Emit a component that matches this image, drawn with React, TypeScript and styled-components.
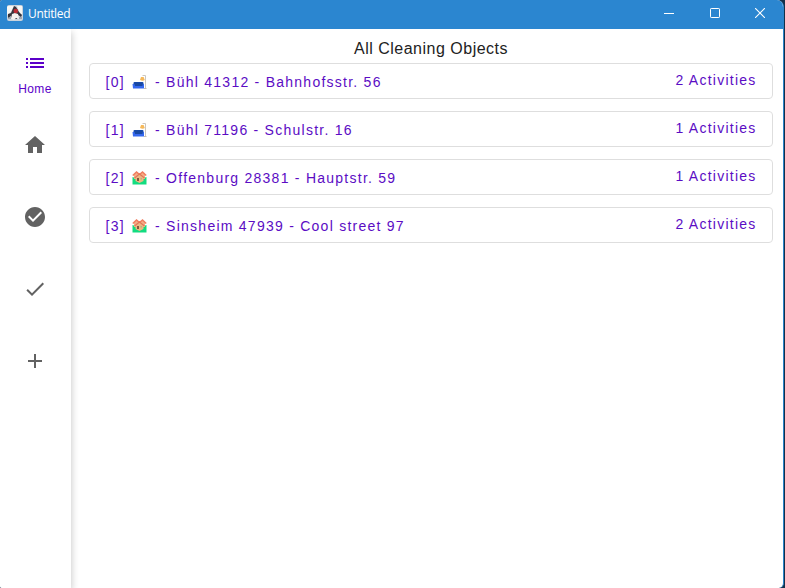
import React from "react";
import styled, { createGlobalStyle } from "styled-components";

const GlobalStyle = createGlobalStyle`
  * { box-sizing: border-box; }
  html, body { margin: 0; height: 100%; background: #14304a; overflow: hidden; }
  body { font-family: "Liberation Sans", Arial, sans-serif; }
`;

const Window = styled.div`
  display: flex;
  flex-direction: column;
  width: 784px;
  height: 588px;
  border-right: 1px solid #2b84c9;
  border-radius: 2px 7px 5px 2px;
  overflow: hidden;
  background: #fff;
`;

const TitleBar = styled.header`
  display: flex;
  align-items: center;
  flex: 0 0 29px;
  height: 29px;
  padding: 0 0 3px 7px;
  background: #2b86d0;
  color: #fff;
`;

const WindowTitle = styled.span`
  flex: 1;
  margin: 2px 0 0 5px;
  font: 12px/16px "Open Sans", "Noto Sans", sans-serif;
  letter-spacing: -0.32px;
`;

const WindowButton = styled.button`
  display: flex;
  align-items: center;
  justify-content: center;
  width: 45.5px;
  height: 26px;
  padding: 0;
  border: 0;
  background: none;
  color: #fff;
`;

const Body = styled.div`
  display: flex;
  flex: 1;
  min-height: 0;
`;

const Rail = styled.nav`
  display: flex;
  flex-direction: column;
  flex: 0 0 71px;
  padding-top: 8px;
  background: #fff;
  box-shadow: 1px 3px 7px rgba(0, 0, 0, 0.2);
  clip-path: inset(0 -12px 0 0);
`;

const RailItem = styled.button<{ $active?: boolean }>`
  display: flex;
  flex-direction: column;
  align-items: center;
  justify-content: center;
  gap: 7px;
  height: 72px;
  padding: ${(p) => (p.$active ? "1px" : "0")} 1px 0 0;
  border: 0;
  background: none;
  color: ${(p) => (p.$active ? "#5b00c9" : "#626262")};
  font: 12px/14px "Liberation Sans", Arial, sans-serif;
  letter-spacing: 0.4px;
  svg { display: block; }
`;

const Content = styled.main`
  display: flex;
  flex-direction: column;
  flex: 1;
  padding: 10px 10px 0 18px;
`;

const Heading = styled.h1`
  margin: 0 0 4px;
  height: 20px;
  font-size: 16px;
  line-height: 20px;
  font-weight: 400;
  letter-spacing: 0.5px;
  text-align: center;
  color: #222;
`;

const ObjectList = styled.div`
  display: flex;
  flex-direction: column;
  gap: 12px;
`;

const ObjectRow = styled.button`
  display: flex;
  justify-content: space-between;
  align-items: flex-start;
  height: 36px;
  padding: 8px 15.4px 0 15.6px;
  border: 1px solid #dedede;
  border-radius: 4px;
  background: #fff;
  color: #5b0cc4;
  font: 14px/16px "Liberation Sans", Arial, sans-serif;
  letter-spacing: 1.25px;
`;

const ObjectName = styled.span`
  display: flex;
  padding-top: 2px;
  white-space: pre;
  svg { flex: none; margin: 0 7px 0 2px; }
`;

type Kind = "couch" | "houses";

const objects: { kind: Kind; address: string; activities: number }[] = [
  { kind: "couch", address: "Bühl 41312 - Bahnhofsstr. 56", activities: 2 },
  { kind: "couch", address: "Bühl 71196 - Schulstr. 16", activities: 1 },
  { kind: "houses", address: "Offenburg 28381 - Hauptstr. 59", activities: 1 },
  { kind: "houses", address: "Sinsheim 47939 - Cool street 97", activities: 2 },
];

const railItems = [
  { label: "Home", path: "M3 13h2v-2H3zM3 17h2v-2H3zM3 9h2V7H3zM7 13h14v-2H7zM7 17h14v-2H7zM7 7v2h14V7z" },
  { path: "M10 20v-6h4v6h5v-8h3L12 3 2 12h3v8z" },
  { path: "M12 2C6.48 2 2 6.48 2 12s4.48 10 10 10 10-4.48 10-10S17.52 2 12 2zm-2 15l-5-5 1.41-1.41L10 14.17l7.59-7.59L19 8l-9 9z" },
  { path: "M9 16.17L4.83 12l-1.42 1.41L9 19 21 7l-1.41-1.41z" },
  { path: "M19 13h-6v6h-2v-6H5v-2h6V5h2v6h6z" },
];

function DukeIcon() {
  return (
    <svg width="16" height="16" viewBox="0 0 16 16">
      <rect width="16" height="16" rx="2" fill="#c9d3dc" />
      <path d="M1 1h6L3 8 0 10V2zM10 1h5v8h-2z" fill="#f7f7f4" />
      <path d="M7 1l2 1 3 5 3 3-1 2-3-2-1 4H5l-1-3-3 2V9l3-1z" fill="#34343d" />
      <path d="M5 9l3-1 3 1 1 5-3-1-2 2-3-1z" fill="#f4f1ef" />
      <circle cx="8.8" cy="6" r="2.3" fill="#b92c35" />
      <path d="M1 13h3M12 13h3" stroke="#747b84" strokeWidth="1.2" />
    </svg>
  );
}

function CouchIcon() {
  return (
    <svg width="16" height="16" viewBox="0 0 16 16">
      <path d="M13.5 14.5V1.5h-3" fill="none" stroke="#cbc6bf" />
      <path d="M9 3h2.6l1.2 3q-2 1.5-4.8 0z" fill="#f6b95b" />
      <path d="M1.5 9q0-1 1-1h8q1 0 1 1v3h-10z" fill="#174aab" />
      <path d="M.5 10h1.8l1 2h6.5l1-2H12v4.5H1z" fill="#3468ee" />
      <path d="M3 9h7.5v3H3z" fill="#1848a2" />
      <path d="M12 14.5h2.5" stroke="#c5bdb2" />
    </svg>
  );
}

function HousesIcon() {
  return (
    <svg width="16" height="16" viewBox="0 0 16 16">
      <path d="M.5 7l3 1h8l3-1v7.5H.5z" fill="#12dc80" />
      <path d="M2 4l3-2 2.5 2L10 2l3 2v5H2z" fill="#f5ae86" />
      <path d="M.8 5.5L4.5 2l3 2.5 3-2.5 3.7 3.5" fill="none" stroke="#f07e60" strokeWidth="1.6" />
      <path d="M3.5 8l4-3.5 4 3.5v3l-4 2-4-2z" fill="#ecb982" />
      <path d="M2.5 8l5-4 5 4" fill="none" stroke="#e2775a" strokeWidth="1.2" />
      <path d="M5 8h2v3H5z" fill="#84583d" />
      <path d="M8.5 8H10v1.5H8.5z" fill="#b8ad83" />
    </svg>
  );
}

export default function App() {
  return (
    <>
      <GlobalStyle />
      <Window>
        <TitleBar>
          <DukeIcon />
          <WindowTitle>Untitled</WindowTitle>
          <WindowButton aria-label="Minimize">
            <svg width="10" height="10"><path d="M0 5.5h10" stroke="currentColor" /></svg>
          </WindowButton>
          <WindowButton aria-label="Maximize">
            <svg width="10" height="10"><rect x=".5" y=".5" width="9" height="9" rx=".7" fill="none" stroke="currentColor" /></svg>
          </WindowButton>
          <WindowButton aria-label="Close">
            <svg width="10" height="10"><path d="M0 0l10 10M10 0L0 10" stroke="currentColor" strokeWidth="1.1" /></svg>
          </WindowButton>
        </TitleBar>
        <Body>
          <Rail>
            {railItems.map(({ label, path }) => (
              <RailItem key={path} $active={!!label}>
                <svg width="24" height="24" viewBox="0 0 24 24"><path d={path} fill="currentColor" /></svg>
                {label}
              </RailItem>
            ))}
          </Rail>
          <Content>
            <Heading>All Cleaning Objects</Heading>
            <ObjectList>
              {objects.map(({ kind, address, activities }, index) => (
                <ObjectRow key={address}>
                  <ObjectName>
                    {`[${index}] `}
                    {kind === "couch" ? <CouchIcon /> : <HousesIcon />}
                    {`- ${address}`}
                  </ObjectName>
                  <span>{activities} Activities</span>
                </ObjectRow>
              ))}
            </ObjectList>
          </Content>
        </Body>
      </Window>
    </>
  );
}
